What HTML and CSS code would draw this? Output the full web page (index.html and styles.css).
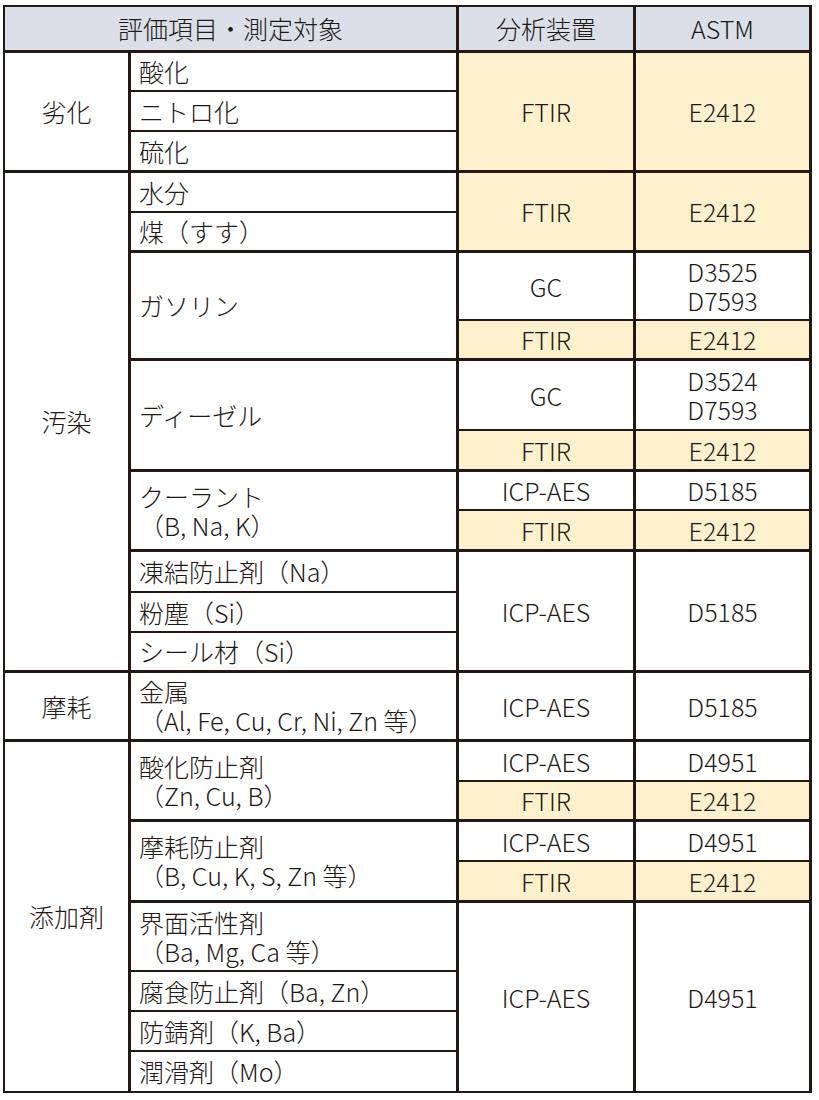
FILE: index.html
```html
<!DOCTYPE html>
<html lang="ja">
<head>
<meta charset="utf-8">
<title>評価項目・測定対象</title>
<link rel="stylesheet" href="styles.css">
</head>
<body>
<div class="sheet">
  <div class="c hd span2 r1">評価項目・測定対象</div>
  <div class="c hd r1">分析装置</div>
  <div class="c hd r1 last">ASTM</div>

  <!-- 劣化 -->
  <div class="c cat major" style="grid-row:2 / span 3">劣化</div>
  <div class="c item minor">酸化</div>
  <div class="c mid y major" style="grid-row:2 / span 3">FTIR</div>
  <div class="c mid y major last" style="grid-row:2 / span 3">E2412</div>
  <div class="c item minor" style="grid-row:3">ニトロ化</div>
  <div class="c item major" style="grid-row:4">硫化</div>

  <!-- 汚染 -->
  <div class="c cat major" style="grid-row:5 / span 11">汚染</div>
  <div class="c item minor" style="grid-row:5">水分</div>
  <div class="c mid y major" style="grid-row:5 / span 2">FTIR</div>
  <div class="c mid y major last" style="grid-row:5 / span 2">E2412</div>
  <div class="c item major" style="grid-row:6">煤（すす）</div>

  <div class="c item major" style="grid-row:7 / span 2">ガソリン</div>
  <div class="c mid minor" style="grid-row:7">GC</div>
  <div class="c mid minor last two" style="grid-row:7"><span>D3525</span><span>D7593</span></div>
  <div class="c mid y major" style="grid-row:8">FTIR</div>
  <div class="c mid y major last" style="grid-row:8">E2412</div>

  <div class="c item major" style="grid-row:9 / span 2">ディーゼル</div>
  <div class="c mid minor" style="grid-row:9">GC</div>
  <div class="c mid minor last two" style="grid-row:9"><span>D3524</span><span>D7593</span></div>
  <div class="c mid y major" style="grid-row:10">FTIR</div>
  <div class="c mid y major last" style="grid-row:10">E2412</div>

  <div class="c item major two" style="grid-row:11 / span 2"><span>クーラント</span><span>（B, Na, K）</span></div>
  <div class="c mid minor" style="grid-row:11">ICP-AES</div>
  <div class="c mid minor last" style="grid-row:11">D5185</div>
  <div class="c mid y major" style="grid-row:12">FTIR</div>
  <div class="c mid y major last" style="grid-row:12">E2412</div>

  <div class="c item minor" style="grid-row:13">凍結防止剤（Na）</div>
  <div class="c mid major" style="grid-row:13 / span 3">ICP-AES</div>
  <div class="c mid major last" style="grid-row:13 / span 3">D5185</div>
  <div class="c item minor" style="grid-row:14">粉塵（Si）</div>
  <div class="c item major" style="grid-row:15">シール材（Si）</div>

  <!-- 摩耗 -->
  <div class="c cat major" style="grid-row:16">摩耗</div>
  <div class="c item major two" style="grid-row:16"><span>金属</span><span>（Al, Fe, Cu, Cr, Ni, Zn 等）</span></div>
  <div class="c mid major" style="grid-row:16">ICP-AES</div>
  <div class="c mid major last" style="grid-row:16">D5185</div>

  <!-- 添加剤 -->
  <div class="c cat bottom" style="grid-row:17 / span 8">添加剤</div>
  <div class="c item major two" style="grid-row:17 / span 2"><span>酸化防止剤</span><span>（Zn, Cu, B）</span></div>
  <div class="c mid minor" style="grid-row:17">ICP-AES</div>
  <div class="c mid minor last" style="grid-row:17">D4951</div>
  <div class="c mid y major" style="grid-row:18">FTIR</div>
  <div class="c mid y major last" style="grid-row:18">E2412</div>

  <div class="c item major two" style="grid-row:19 / span 2"><span>摩耗防止剤</span><span>（B, Cu, K, S, Zn 等）</span></div>
  <div class="c mid minor" style="grid-row:19">ICP-AES</div>
  <div class="c mid minor last" style="grid-row:19">D4951</div>
  <div class="c mid y major" style="grid-row:20">FTIR</div>
  <div class="c mid y major last" style="grid-row:20">E2412</div>

  <div class="c item minor two" style="grid-row:21"><span>界面活性剤</span><span>（Ba, Mg, Ca 等）</span></div>
  <div class="c mid bottom" style="grid-row:21 / span 4">ICP-AES</div>
  <div class="c mid bottom last" style="grid-row:21 / span 4">D4951</div>
  <div class="c item minor" style="grid-row:22">腐食防止剤（Ba, Zn）</div>
  <div class="c item minor" style="grid-row:23">防錆剤（K, Ba）</div>
  <div class="c item bottom" style="grid-row:24">潤滑剤（Mo）</div>
</div>
</body>
</html>
```

FILE: styles.css
```css
html, body {
  margin: 0;
  padding: 0;
  background: #ffffff;
}

body {
  font-family: "Noto Sans CJK JP", "Noto Sans", sans-serif;
  font-weight: 300;
  color: #231815;
  font-size: 25px;
  line-height: 29px;
}

.sheet {
  display: grid;
  margin: 5px 0 0 3px;
  width: 809px;
  box-sizing: border-box;
  grid-template-columns: 126px 328px 177px 176px;
  grid-template-rows: 46px 39px 40px 41px 40px 40px 68px 40px 70px 41px 39px 41px 41px 40px 40px 69px 40px 40px 40px 41px 69px 40px 40px 41px;
  border-top: 2px solid #231815;
  border-left: 2px solid #231815;
}

.c {
  box-sizing: border-box;
  border-right: 3px solid #231815;
  display: flex;
  align-items: center;
  min-width: 0;
  white-space: nowrap;
}

.hd {
  background: #dadfe8;
  justify-content: center;
  border-bottom: 3px solid #231815;
  padding-bottom: 1px;
}

.span2 {
  grid-column: 1 / span 2;
}

.major {
  border-bottom: 3px solid #231815;
}

.minor {
  border-bottom: 2px solid #231815;
}

.bottom {
  border-bottom: 2px solid #231815;
}

.cat {
  grid-column: 1;
  justify-content: center;
}

.item {
  grid-column: 2;
  padding-left: 8px;
}

.mid {
  justify-content: center;
}

.mid.last {
  grid-column: 4;
}

.mid:not(.last) {
  grid-column: 3;
}

.y {
  background: #fdf0cc;
}

.two {
  flex-direction: column;
  justify-content: center;
}

.two span {
  display: block;
  height: 29px;
  line-height: 29px;
}

.item.two {
  align-items: flex-start;
}

.mid.two {
  align-items: center;
}
```
